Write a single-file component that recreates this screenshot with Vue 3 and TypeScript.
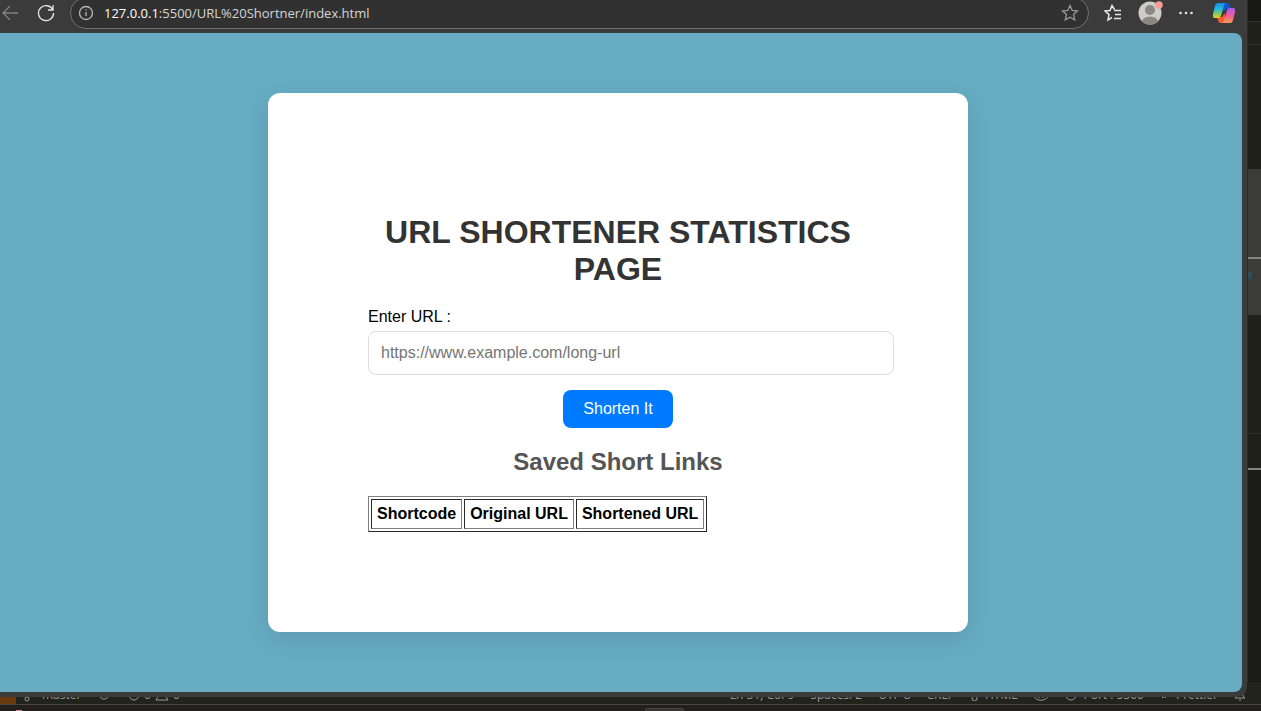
<script setup lang="ts">
import { ref } from 'vue'

const longUrl = ref('')
const columns: string[] = ['Shortcode', 'Original URL', 'Shortened URL']
</script>

<template>
  <div class="desktop">
    <div class="editor">
      <div class="editor-body">
        <div class="gutter">
          <div class="strip tabs"></div>
          <div class="strip crumbs"></div>
          <div class="strip panel"></div>
          <div class="strip panel lower"><i></i></div>
          <div class="strip dark"></div>
          <div class="strip terminal"></div>
          <div class="strip prompt"></div>
        </div>
      </div>
      <div class="status">
        <span class="remote"></span>
        <svg class="branch" width="10" height="14" viewBox="0 0 10 14"><circle cx="3" cy="3" r="2" /><circle cx="3" cy="11" r="2" /><path d="M3 5v4M8 4c0 3-5 2-5 4" /></svg>
        <span class="master">master*</span>
        <svg class="sync" width="12" height="12" viewBox="0 0 12 12"><path d="M1 6a5 5 0 0 1 9-2M11 6a5 5 0 0 1-9 2M0 6h3M9 6h3" /></svg>
        <svg width="12" height="12" viewBox="0 0 12 12"><circle cx="6" cy="6" r="5" /><path d="M4 4l4 4M8 4l-4 4" /></svg>
        <span class="count">0</span>
        <svg width="14" height="12" viewBox="0 0 14 12"><path d="M7 1l6 10H1z" /></svg>
        <span class="count">0</span>
        <div class="status-right">
          <span>Ln 31, Col 9</span>
          <span>Spaces: 2</span>
          <span>UTF-8</span>
          <span>CRLF</span>
          <span class="pair"><span>{}</span>HTML</span>
          <svg width="16" height="12" viewBox="0 0 16 12"><path d="M2 5c0-5 12-5 12 0M1 6c0 7 14 7 14 0M6 7v2M10 7v2" /></svg>
          <span class="pair"><svg width="12" height="12" viewBox="0 0 12 12"><circle cx="6" cy="6" r="5" /></svg>Port : 5500</span>
          <span class="pair"><svg width="10" height="12" viewBox="0 0 10 12"><path d="M0 6l3 3 5-6M5 9l5-6" /></svg>Prettier</span>
          <svg width="12" height="12" viewBox="0 0 12 12"><path d="M1 9h10L9 7V4a3 3 0 0 0-6 0v3zM5 11h2" /></svg>
        </div>
      </div>
    </div>

    <div class="browser">
      <header class="toolbar">
        <button class="tool back" aria-label="Back">
          <svg width="20" height="16" viewBox="0 0 20 16"><path d="M18 8H3M10 1L3 8l7 7" /></svg>
        </button>
        <button class="tool reload" aria-label="Refresh">
          <svg width="18" height="18" viewBox="0 0 18 18"><path d="M15.8 6A7.5 7.5 0 1 0 16.5 9M16 1v5h-5" /></svg>
        </button>
        <div class="address">
          <svg class="info" width="16" height="16" viewBox="0 0 16 16"><circle cx="8" cy="8" r="6.5" /><path d="M8 7v4M8 4.500v1" /></svg>
          <span class="url"><b>127.0.0.1</b>:5500/URL%20Shortner/index.html</span>
          <button class="tool star" aria-label="Add to favorites">
            <svg width="18" height="18" viewBox="0 0 18 18"><path d="M9 1.500l2.200 5 5.300.5-4 3.600 1.200 5.400L9 13.200l-4.700 2.800 1.200-5.400-4-3.600 5.300-.5z" /></svg>
          </button>
        </div>
        <button class="tool favs" aria-label="Favorites">
          <svg width="18" height="18" viewBox="0 0 18 18"><path d="M10.500 5.500L8 1.500 6 6.500 1 7l4 3.600L4 16l4-2.500M10 6.500h7M11 10.500h6M10 14.500h7" /></svg>
        </button>
        <button class="tool avatar" aria-label="Profile">
          <svg width="26" height="26" viewBox="0 0 26 26">
            <defs><clipPath id="face"><circle cx="13" cy="13" r="11.500" /></clipPath></defs>
            <circle cx="13" cy="13" r="11.500" fill="#cfccc8" />
            <g clip-path="url(#face)" fill="#8b8782"><circle cx="13" cy="10" r="5" /><ellipse cx="13" cy="22" rx="8" ry="5.500" /></g>
            <circle cx="22" cy="5" r="3.700" fill="#f99a94" />
          </svg>
        </button>
        <button class="tool more" aria-label="Settings and more">
          <svg width="16" height="16" viewBox="0 0 16 16"><circle cx="2.500" cy="8" r="1.300" /><circle cx="8" cy="8" r="1.300" /><circle cx="13.500" cy="8" r="1.300" /></svg>
        </button>
        <button class="tool copilot" aria-label="Copilot">
          <svg width="24" height="22" viewBox="0 0 24 22">
            <defs>
              <linearGradient id="cool" x1="0" y1="0" x2="0" y2="1"><stop offset="0" stop-color="#178be8" /><stop offset=".4" stop-color="#22b9df" /><stop offset=".75" stop-color="#8fce55" /><stop offset="1" stop-color="#f1ce20" /></linearGradient>
              <linearGradient id="warm" x1="0" y1="0" x2="0" y2="1"><stop offset="0" stop-color="#a65cf0" /><stop offset=".5" stop-color="#ed5d9d" /><stop offset="1" stop-color="#ff9b50" /></linearGradient>
            </defs>
            <path fill="#1754c9" d="M11 1h4c2 0 2.500 1 3 3l1 3h-5l-3 3z" />
            <path fill="#f45b35" d="M5 15h5l3-4v10H9c-2 0-2.500-1-3-3z" />
            <path fill="url(#cool)" d="M6 1h9c-2 0-3 2-3.500 4L9.500 12c-.7 2.500-1.500 4-3.500 4H3c-2 0-2.500-1.500-2-4L3 4c.5-2 1-3 3-3z" />
            <path fill="url(#warm)" d="M18 21H9c2 0 3-2 3.500-4l2-7c.7-2.500 1.500-4 3.500-4h3c2 0 2.500 1.500 2 4l-2 8c-.5 2-1 3-3 3z" />
          </svg>
        </button>
      </header>

      <main class="page">
        <section class="card">
          <h1>URL SHORTENER STATISTICS PAGE</h1>
          <form @submit.prevent>
            <label for="long-url">Enter URL :</label>
            <input id="long-url" v-model="longUrl" type="url" placeholder="https://www.example.com/long-url" />
            <button class="submit" type="submit">Shorten It</button>
          </form>
          <h2>Saved Short Links</h2>
          <table>
            <thead>
              <tr>
                <th v-for="name in columns" :key="name" scope="col">{{ name }}</th>
              </tr>
            </thead>
          </table>
        </section>
      </main>
    </div>

    <div class="taskbar"><span class="pin"></span><span class="search"></span></div>
  </div>
</template>

<style>
body {
  margin: 0;
  background: #1f1f1b;
}
</style>

<style scoped>
.desktop {
  display: grid;
  grid-template-columns: minmax(0, 1fr);
  grid-template-rows: minmax(0, 1fr) 6px;
  height: 100vh;
  overflow: hidden;
  font-family: "Open Sans", "Noto Sans", sans-serif;
}
.editor,
.browser {
  grid-row: 1;
  grid-column: 1;
  min-height: 0;
}
.editor {
  display: flex;
  flex-direction: column;
  background: #20201b;
}
.editor-body {
  flex: 1;
  display: flex;
  justify-content: flex-end;
}
.gutter {
  width: 13px;
  display: flex;
  flex-direction: column;
  border-left: 1px solid #2c2c29;
}
.strip {
  box-sizing: border-box;
  border-bottom: 1px solid #30302c;
}
.tabs { height: 22px; background: #181814; }
.crumbs { height: 23px; }
.panel { height: 214px; background: linear-gradient(#20201b 124px, #3b3b3a 124px); border-bottom: 2px solid #858582; }
.panel.lower { height: 56px; padding-top: 13px; background: #3b3b3a; border: 0; }
.panel.lower i { display: block; width: 4px; height: 7px; background: #2b4f5c; }
.dark { height: 119px; }
.terminal { height: 36px; border-bottom: 2px solid #858582; }
.prompt { flex: 1; border: 0; background: #1b1b17; }
.status {
  box-sizing: border-box;
  height: 23px;
  display: flex;
  align-items: center;
  overflow: hidden;
  background: #23231e;
  border-bottom: 1px solid #484845;
  padding: 4px 15px 0 0;
  color: #989894;
  font-size: 12px;
  line-height: 18px;
  white-space: nowrap;
}
.status svg {
  flex: none;
  fill: none;
  stroke: #989894;
}
.remote { width: 16px; height: 18px; background: #6b3a0c; }
.branch { margin: 0 8px; }
.master { width: 56px; }
.sync { margin-right: 18px; }
.count { margin: 0 4px; }
.status-right {
  margin-left: auto;
  display: flex;
  align-items: center;
  gap: 16px;
}
.pair {
  display: flex;
  align-items: center;
  gap: 6px;
}
.browser {
  z-index: 1;
  display: flex;
  flex-direction: column;
  margin: 0 14px 8px 0;
  padding: 0 5px 5px 0;
  border-radius: 0 0 10px 0;
  background: #3b3b3b;
}
.toolbar {
  flex: none;
  display: flex;
  align-items: flex-start;
  height: 33px;
  overflow: hidden;
}
.tool {
  flex: none;
  display: flex;
  align-items: center;
  justify-content: center;
  height: 26px;
  padding: 0;
  border: 0;
  background: none;
}
.tool svg {
  flex: none;
  fill: none;
  stroke: #e6e6e6;
  stroke-width: 1.3;
}
.back { width: 20px; }
.back svg { stroke: #808080; }
.reload { width: 52px; }
.address {
  box-sizing: border-box;
  flex: 1;
  display: flex;
  align-items: center;
  height: 32px;
  margin: -3px 0 0 -2px;
  padding: 0 9px 1px 7px;
  border: 1px solid #707070;
  border-radius: 16px;
  background: #313131;
}
.info {
  margin-right: 10px;
  fill: none;
  stroke: #b8b8b8;
  stroke-width: 1.3;
}
.url {
  flex: 1;
  color: #d5d5d5;
  font-size: 13px;
  line-height: 20px;
}
.url b { color: #fff; font-weight: 400; }
.star svg { stroke: #999; }
.favs { width: 48px; }
.favs svg { stroke-width: 1.5; }
.tool.avatar svg { stroke: none; }
.more { width: 46px; }
.more svg { fill: #e6e6e6; stroke: none; }
.copilot { margin: 0 6px 0 3px; }
.copilot svg { stroke: none; }
.page {
  flex: 1;
  min-height: 0;
  display: flex;
  align-items: center;
  justify-content: center;
  padding-right: 6px;
  border-radius: 0 8px 8px 0;
  background: #67acc3;
  font-family: "Liberation Sans", Arial, sans-serif;
}
.card {
  box-sizing: border-box;
  width: 700px;
  max-width: 100%;
  padding: 100px;
  border-radius: 12px;
  background: #fff;
  box-shadow: 0 8px 24px rgba(0, 0, 0, 0.1);
  color: #000;
  font-size: 16px;
  line-height: 18px;
}
h1 {
  margin: 21px 0 20px;
  color: #333;
  font-size: 32px;
  line-height: 37px;
  text-align: center;
}
form {
  display: flex;
  flex-direction: column;
  align-items: flex-start;
}
label { margin-bottom: 5px; }
input {
  width: 100%;
  height: 18px;
  padding: 12px;
  border: 1px solid #ddd;
  border-radius: 8px;
  background: #fff;
  color: #000;
  font: inherit;
}
input::placeholder { color: #757575; }
.submit {
  align-self: center;
  margin-top: 15px;
  padding: 10px 20px;
  border: 0;
  border-radius: 8px;
  background: #007bff;
  color: #fff;
  font: inherit;
}
h2 {
  margin: 20px 0;
  color: #555;
  font-size: 24px;
  line-height: 28px;
  text-align: center;
}
table {
  border: 1px solid;
  border-color: #808080 #2b2b2b #2b2b2b #808080;
  border-spacing: 2px;
}
th {
  padding: 5px;
  border: 1px solid;
  border-color: #2b2b2b #808080 #808080 #2b2b2b;
}
.taskbar {
  grid-row: 2;
  grid-column: 1;
  display: flex;
  align-items: flex-end;
  background: #221f1e;
}
.pin {
  width: 6px;
  height: 1px;
  margin-left: 16px;
  background: #d98895;
}
.search {
  box-sizing: border-box;
  width: 39px;
  height: 3px;
  margin-left: 623px;
  border: 1px solid #484645;
  border-bottom: 0;
  border-radius: 3px 3px 0 0;
  background: #353332;
}
</style>
